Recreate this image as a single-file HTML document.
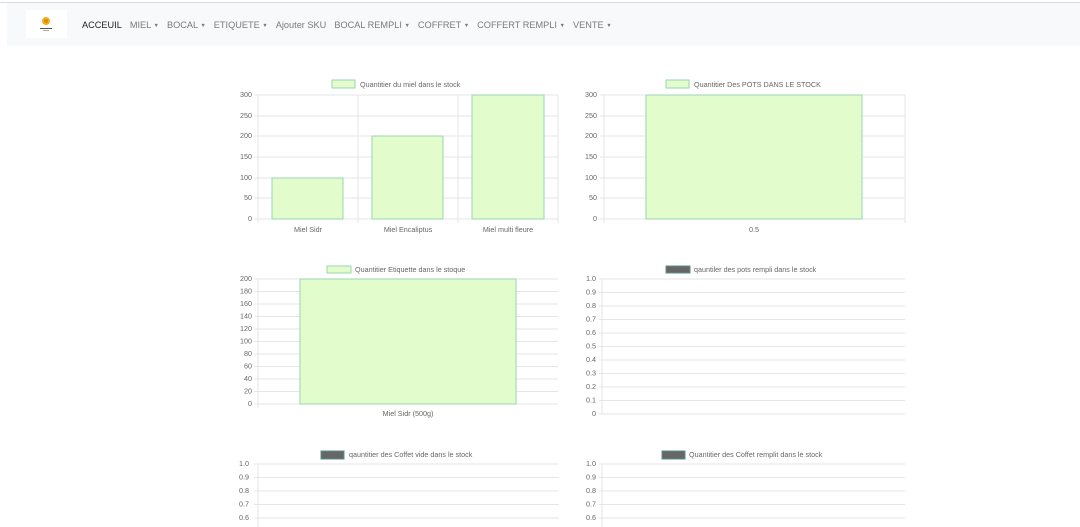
<!DOCTYPE html>
<html><head><meta charset="utf-8"><style>
body{margin:0;width:1080px;height:527px;overflow:hidden;background:#fff;font-family:"Liberation Sans",sans-serif;position:relative}
.top{position:absolute;left:0;top:2px;width:1080px;height:1px;background:#dcdcdc}
.nav{position:absolute;left:7px;top:3px;width:1073px;height:43px;background:#f8f9fa}
.logo{position:absolute;left:26px;top:10px;width:41px;height:28px;background:#fff}
.menu{position:absolute;left:82px;top:20px;font-size:9.2px;color:#7a7a7a;white-space:nowrap}
.menu span{margin-right:8px}
.menu span span{margin:0}
.menu b{font-weight:normal;color:#222}
.c{font-size:0.6em;vertical-align:1px}
svg{position:absolute;left:0;top:0}
svg text{font-family:"Liberation Sans",sans-serif;font-size:7.2px;fill:#666}
</style></head><body>
<div class="top"></div>
<div class="nav"></div>
<div class="logo"><svg width="41" height="28"><circle cx="20" cy="11" r="4" fill="#f5b01a"/><circle cx="20" cy="11" r="2" fill="#e08a00"/><rect x="14" y="18" width="12" height="1" fill="#555"/><rect x="17" y="20" width="6" height="1" fill="#aaa"/></svg></div>
<div class="menu"><span><b>ACCEUIL</b></span><span>MIEL <span class="c">▼</span></span><span>BOCAL <span class="c">▼</span></span><span>ETIQUETE <span class="c">▼</span></span><span>Ajouter SKU</span><span>BOCAL REMPLI <span class="c">▼</span></span><span>COFFRET <span class="c">▼</span></span><span>COFFERT REMPLI <span class="c">▼</span></span><span>VENTE <span class="c">▼</span></span></div>
<svg width="1080" height="527">
<g stroke="#e6e6e6" stroke-width="1">
<path d="M254 95H558M254 116H558M254 136H558M254 157H558M254 178H558M254 198H558M254 219H558M258 95V223M358 95V223M458 95V223M558 95V223"/>
<path d="M600 95H905M600 116H905M600 136H905M600 157H905M600 178H905M600 198H905M600 219H905M604 95V223M905 95V223"/>
<path d="M254 279H558M254 291.5H558M254 304H558M254 316.5H558M254 329H558M254 341.5H558M254 354H558M254 366.5H558M254 379H558M254 391.5H558M254 404H558M258 279V408"/>
<path d="M599 279H905M599 292.5H905M599 306H905M599 319.5H905M599 333H905M599 346.5H905M599 360H905M599 373.5H905M599 387H905M599 400.5H905M599 414H905M602 279V414"/>
<path d="M254 464H559M254 477.5H559M254 491H559M254 504.5H559M254 518H559M258 464V527"/>
<path d="M599 464H905M599 477.5H905M599 491H905M599 504.5H905M599 518H905M602 464V527"/>
</g>
<g fill="#e2fccc" stroke="#9ad6b0" stroke-width="1">
<rect x="272" y="178" width="71" height="41"/>
<rect x="372" y="136" width="71" height="83"/>
<rect x="472" y="95" width="72" height="124"/>
<rect x="646" y="95" width="216" height="124"/>
<rect x="300" y="279" width="216" height="125"/>
<rect x="332" y="80" width="23" height="8"/>
<rect x="666" y="80" width="23" height="8"/>
<rect x="327" y="266" width="24" height="7"/>
</g>
<g fill="#666" stroke="#5a8f8a" stroke-width="1">
<rect x="666" y="266" width="24" height="7"/>
<rect x="321" y="451" width="23" height="8"/>
<rect x="662" y="451" width="23" height="8"/>
</g>
<text x="360" y="87">Quantitier du miel dans le stock</text>
<text x="694" y="87">Quantitier Des POTS DANS LE STOCK</text>
<text x="355" y="272">Quantitier Etiquette dans le stoque</text>
<text x="694" y="272">qauntiler des pots rempli dans le stock</text>
<text x="349" y="457">qauntitier des Coffet vide dans le stock</text>
<text x="689" y="457">Quantitier des Coffet remplit dans le stock</text>
<g text-anchor="middle">
<text x="308" y="232">Miel Sidr</text><text x="408" y="232">Miel Encaliptus</text><text x="508" y="232">Miel multi fleure</text>
<text x="754" y="232">0.5</text><text x="408" y="416">Miel Sidr (500g)</text>
</g>
<g text-anchor="end">
<text x="252" y="97">300</text><text x="252" y="118">250</text><text x="252" y="138">200</text><text x="252" y="159">150</text><text x="252" y="180">100</text><text x="252" y="200">50</text><text x="252" y="221">0</text>
<text x="597" y="97">300</text><text x="597" y="118">250</text><text x="597" y="138">200</text><text x="597" y="159">150</text><text x="597" y="180">100</text><text x="597" y="200">50</text><text x="597" y="221">0</text>
<text x="252" y="281">200</text><text x="252" y="293.5">180</text><text x="252" y="306">160</text><text x="252" y="318.5">140</text><text x="252" y="331">120</text><text x="252" y="343.5">100</text><text x="252" y="356">80</text><text x="252" y="368.5">60</text><text x="252" y="381">40</text><text x="252" y="393.5">20</text><text x="252" y="406">0</text>
<text x="596" y="281">1.0</text><text x="596" y="294.5">0.9</text><text x="596" y="308">0.8</text><text x="596" y="321.5">0.7</text><text x="596" y="335">0.6</text><text x="596" y="348.5">0.5</text><text x="596" y="362">0.4</text><text x="596" y="375.5">0.3</text><text x="596" y="389">0.2</text><text x="596" y="402.5">0.1</text><text x="596" y="416">0</text>
<text x="249" y="466">1.0</text><text x="249" y="479.5">0.9</text><text x="249" y="493">0.8</text><text x="249" y="506.5">0.7</text><text x="249" y="520">0.6</text>
<text x="596" y="466">1.0</text><text x="596" y="479.5">0.9</text><text x="596" y="493">0.8</text><text x="596" y="506.5">0.7</text><text x="596" y="520">0.6</text>
</g>
</svg>
</body></html>
